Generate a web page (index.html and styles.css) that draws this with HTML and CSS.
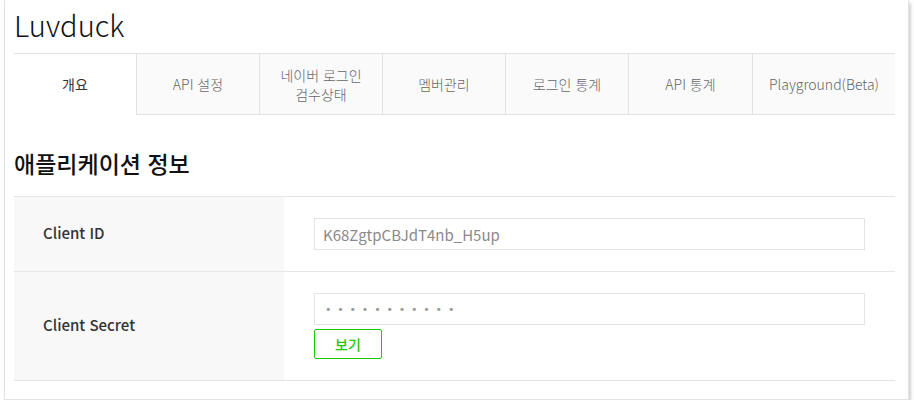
FILE: index.html
```html
<!DOCTYPE html>
<html lang="ko">
<head>
<meta charset="utf-8">
<title>Luvduck</title>
<link rel="stylesheet" href="styles.css">
</head>
<body>
<div class="card">
  <h1 class="app-title">Luvduck</h1>
  <nav class="tabs">
    <div class="tab active">개요</div>
    <div class="tab">API 설정</div>
    <div class="tab two-line">네이버 로그인<br>검수상태</div>
    <div class="tab">멤버관리</div>
    <div class="tab">로그인 통계</div>
    <div class="tab">API 통계</div>
    <div class="tab">Playground(Beta)</div>
  </nav>
  <h2 class="section-title">애플리케이션 정보</h2>
  <div class="info-table">
    <div class="row">
      <div class="label">Client ID</div>
      <div class="value">
        <div class="field">K68ZgtpCBJdT4nb_H5up</div>
      </div>
    </div>
    <div class="row">
      <div class="label">Client Secret</div>
      <div class="value">
        <div class="field secret"><span class="dots">•••••••••••</span></div>
        <button class="show-btn" type="button">보기</button>
      </div>
    </div>
  </div>
</div>
</body>
</html>
```

FILE: styles.css
```css
* { box-sizing: border-box; }
html, body { margin: 0; padding: 0; background: #ffffff; }
body {
  font-family: "Noto Sans CJK KR", "Noto Sans", sans-serif;
  color: #222;
}
.card {
  margin: 0 5px 0 4px;
  height: 400px;
  border: 1px solid #e3e3e3;
  border-top: none;
  background: #fff;
  box-shadow: 2px 3px 3px rgba(0, 0, 0, 0.18);
  padding: 0 13px 0 9px;
}
.app-title {
  margin: 0;
  height: 53px;
  padding-top: 4px;
  font-size: 29px;
  line-height: 40px;
  font-weight: 300;
  color: #111;
}
.tabs {
  display: grid;
  grid-template-columns: 122px 123px 123px 123px 123px 124px 1fr;
  border-top: 1px solid #e2e2e2;
  height: 62px;
}
.tab {
  display: flex;
  align-items: center;
  justify-content: center;
  text-align: center;
  font-size: 14px;
  line-height: 19px;
  font-weight: 300;
  color: #666;
  background: #fafafa;
  border-bottom: 1px solid #e2e2e2;
  border-left: 1px solid #e2e2e2;
}
.tab.two-line { padding-top: 1px; }
.tab.active {
  background: #fff;
  border-bottom-color: transparent;
  border-left: none;
  color: #333;
  font-weight: 400;
}
.section-title {
  margin: 0;
  height: 81px;
  padding-top: 33px;
  font-size: 23px;
  line-height: 30px;
  font-weight: 500;
  color: #111;
}
.info-table {
  border-top: 1px solid #e5e5e5;
}
.row {
  display: flex;
  border-bottom: 1px solid #e5e5e5;
}
.label {
  width: 270px;
  flex: none;
  background: #f8f8f8;
  display: flex;
  align-items: center;
  padding-left: 29px;
  padding-bottom: 3px;
  font-size: 15px;
  font-weight: 500;
  color: #333;
}
.value {
  flex: 1;
  padding: 21px 30px 21px 30px;
  display: flex;
  flex-direction: column;
  align-items: flex-start;
  gap: 4px;
}
.field {
  width: 100%;
  height: 32px;
  border: 1px solid #e3e3e3;
  padding: 0 8px;
  display: flex;
  align-items: center;
  font-size: 15px;
  color: #8a8a8a;
  background: #fff;
}
.dots {
  font-family: "DejaVu Sans", sans-serif;
  font-size: 11px;
  letter-spacing: 5.8px;
  color: #999;
  padding-left: 2px;
}
.show-btn {
  width: 68px;
  height: 30px;
  border: 1px solid #1ec800;
  border-radius: 2px;
  background: #fff;
  color: #1ec800;
  font-family: "Noto Sans CJK KR", sans-serif;
  font-size: 14px;
  font-weight: 500;
  padding: 0;
  cursor: pointer;
}
```
